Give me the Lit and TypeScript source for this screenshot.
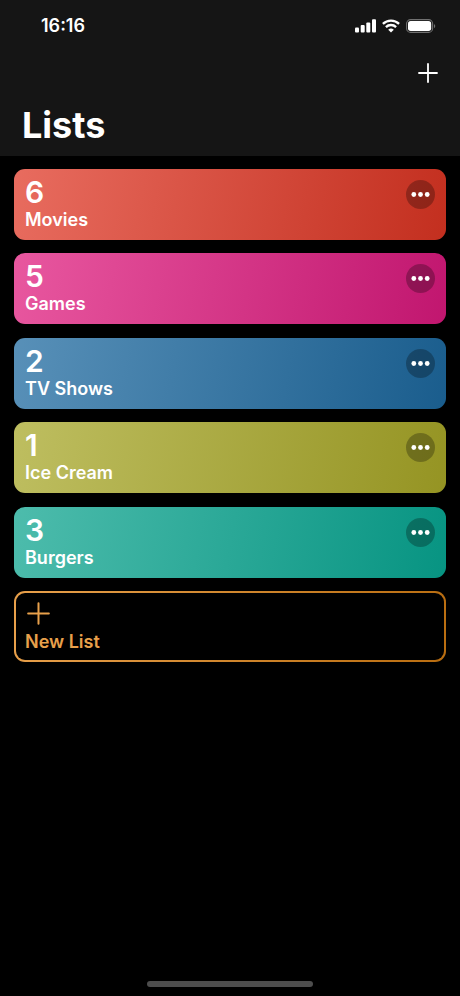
import { LitElement, html, css, svg } from "lit";
import { customElement, property } from "lit/decorators.js";

interface ListSummary {
  count: number;
  name: string;
  theme: string;
}

const lists: ListSummary[] = [
  { count: 6, name: "Movies", theme: "red" },
  { count: 5, name: "Games", theme: "pink" },
  { count: 2, name: "TV Shows", theme: "blue" },
  { count: 1, name: "Ice Cream", theme: "olive" },
  { count: 3, name: "Burgers", theme: "teal" },
];

const plus = (size: number, weight: number) => svg`
  <svg width=${size} height=${size} viewBox="0 0 24 24" fill="none" stroke="currentColor"
    stroke-width=${weight} stroke-linecap="round" aria-hidden="true">
    <path d="M12 1.2V22.8M1.2 12H22.8" />
  </svg>`;

@customElement("status-bar")
export class StatusBar extends LitElement {
  static styles = css`
    :host {
      display: flex;
      justify-content: space-between;
      align-items: center;
      height: 52px;
      padding: 0 24px 0 41px;
    }
    .time {
      font-size: 18px;
      line-height: 24px;
      font-weight: 600;
    }
    .icons {
      display: flex;
      align-items: center;
      gap: 6px;
    }
    svg {
      display: block;
    }
  `;

  render() {
    return html`
      <span class="time">16:16</span>
      <div class="icons">
        <svg width="21" height="14" viewBox="0 0 21 14" fill="#fff" role="img" aria-label="Signal">
          <rect x="0" y="8.5" width="4" height="5" rx="1" />
          <rect x="5.7" y="6" width="4" height="7.5" rx="1" />
          <rect x="11.3" y="3.5" width="4" height="10" rx="1" />
          <rect x="17" y="0.3" width="4" height="13.2" rx="1" />
        </svg>
        <svg width="18" height="14" viewBox="0 0 18 14" role="img" aria-label="Wi-Fi">
          <g fill="none" stroke="#fff" stroke-width="2.3">
            <path d="M0.9 4.9A11.6 11.6 0 0 1 17.1 4.9" />
            <path d="M3.9 8.1A7.3 7.3 0 0 1 14.1 8.1" />
          </g>
          <path d="M9 13.6L6.2 10.8A4 4 0 0 1 11.8 10.8Z" fill="#fff" />
        </svg>
        <svg width="30" height="14" viewBox="0 0 30 14" role="img" aria-label="Battery">
          <rect x="0.6" y="0.6" width="26" height="12.8" rx="4" fill="none" stroke="#707070" stroke-width="1.1" />
          <rect x="2" y="2" width="23.2" height="10" rx="2.7" fill="#fff" />
          <path d="M28 5V9.2C29.7 8.4 29.7 5.8 28 5Z" fill="#707070" />
        </svg>
      </div>
    `;
  }
}

@customElement("list-card")
export class ListCard extends LitElement {
  @property({ type: Number }) count = 0;
  @property() name = "";
  @property() theme = "red";

  static styles = css`
    :host {
      display: block;
    }
    .card {
      display: flex;
      justify-content: space-between;
      align-items: flex-start;
      box-sizing: border-box;
      height: 100%;
      padding: 7px 11px;
      border-radius: 11px;
    }
    .red { background: linear-gradient(100deg, #e86c5f, #c32f1f); }
    .pink { background: linear-gradient(100deg, #e8579f, #c1166f); }
    .blue { background: linear-gradient(100deg, #5890b8, #1a5d8d); }
    .olive { background: linear-gradient(100deg, #bebe60, #959423); }
    .teal { background: linear-gradient(100deg, #4dbcac, #079482); }
    .count {
      font-size: 30px;
      line-height: 32px;
      font-weight: 600;
    }
    .name {
      font-size: 18px;
      line-height: 24px;
      font-weight: 600;
    }
    .more {
      display: flex;
      align-items: center;
      justify-content: center;
      width: 29px;
      height: 29px;
      margin-top: 4px;
      padding: 0;
      border: 0;
      border-radius: 50%;
      background: rgba(0, 0, 0, 0.27);
      color: #fff;
    }
  `;

  render() {
    return html`
      <article class="card ${this.theme}">
        <div>
          <div class="count">${this.count}</div>
          <div class="name">${this.name}</div>
        </div>
        <button class="more" aria-label="More options for ${this.name}">
          <svg width="19" height="5" viewBox="0 0 19 5" fill="currentColor" aria-hidden="true">
            <circle cx="2.8" cy="2.5" r="2.4" />
            <circle cx="9.5" cy="2.5" r="2.4" />
            <circle cx="16.2" cy="2.5" r="2.4" />
          </svg>
        </button>
      </article>
    `;
  }
}

@customElement("app-root")
export class AppRoot extends LitElement {
  static styles = css`
    :host {
      display: flex;
      flex-direction: column;
      min-height: 100vh;
      background: #000;
      color: #fff;
      font-family: Inter, "Liberation Sans", sans-serif;
    }
    header {
      background: #151515;
      padding-bottom: 8px;
    }
    .toolbar {
      display: flex;
      justify-content: flex-end;
      padding: 6px 17px;
    }
    button {
      font: inherit;
      cursor: pointer;
    }
    .add {
      display: flex;
      align-items: center;
      justify-content: center;
      width: 30px;
      height: 30px;
      padding: 0;
      border: 0;
      background: none;
      color: #fff;
    }
    h1 {
      margin: 0;
      padding: 8px 22px 0;
      font-size: 36px;
      line-height: 46px;
      font-weight: 700;
    }
    main {
      flex: 1;
      padding: 13px 14px;
    }
    .lists {
      display: grid;
      grid-auto-rows: 71px;
      align-content: space-between;
      min-height: 493px;
    }
    .new {
      display: flex;
      flex-direction: column;
      align-items: flex-start;
      justify-content: space-between;
      padding: 9px 9px 6px;
      border: 2px solid transparent;
      border-radius: 11px;
      background:
        linear-gradient(#000, #000) padding-box,
        linear-gradient(100deg, #e8a04b, #b96d10) border-box;
      color: #e8a04b;
      font-size: 18px;
      line-height: 24px;
      font-weight: 600;
    }
    .new svg {
      margin-left: 2px;
    }
    footer {
      display: flex;
      justify-content: center;
      padding-bottom: 9px;
    }
    .home {
      width: 36%;
      height: 6px;
      border-radius: 3px;
      background: #4d4d4d;
    }
  `;

  render() {
    return html`
      <header>
        <status-bar></status-bar>
        <div class="toolbar">
          <button class="add" aria-label="Add list">${plus(20, 2.2)}</button>
        </div>
        <h1>Lists</h1>
      </header>
      <main>
        <div class="lists">
          ${lists.map(
            (l) => html`<list-card .count=${l.count} .name=${l.name} .theme=${l.theme}></list-card>`
          )}
          <button class="new">${plus(23, 2.1)}<span>New List</span></button>
        </div>
      </main>
      <footer><div class="home"></div></footer>
    `;
  }
}
